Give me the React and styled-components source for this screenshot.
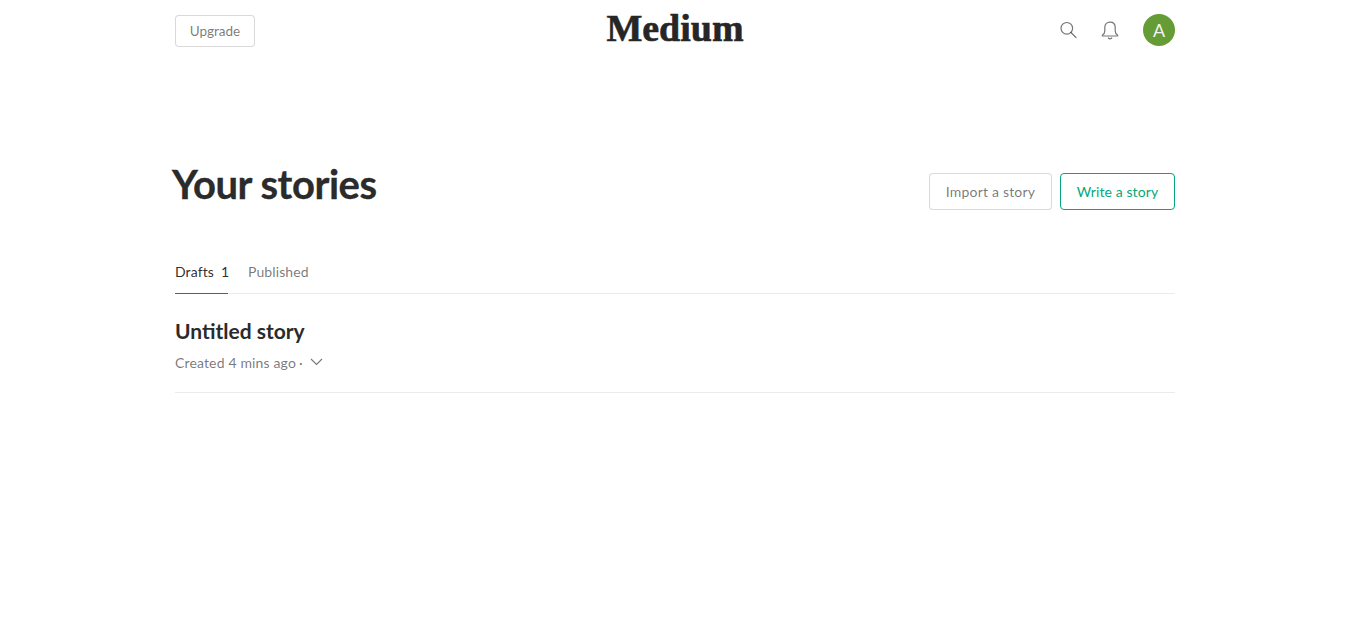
import React from 'react';
import styled, { createGlobalStyle } from 'styled-components';

const GlobalStyle = createGlobalStyle`
  body {
    margin: 0;
    background: #fff;
    font-family: "Lato", "Noto Sans", sans-serif;
    color: rgba(0, 0, 0, 0.84);
  }
`;

const Page = styled.div`
  width: 1000px;
  margin-left: 175px;
`;

const TopBar = styled.header`
  display: flex;
  align-items: center;
  justify-content: space-between;
  height: 60px;
`;

const TopSide = styled.div`
  flex: 1;
  display: flex;
  align-items: center;
  justify-content: ${(p) => (p.$end ? 'flex-end' : 'flex-start')};
`;

const Logo = styled.div`
  font-family: "Liberation Serif", serif;
  font-weight: 700;
  font-size: 38px;
  line-height: 56px;
  padding-bottom: 4px;
  -webkit-text-stroke: 0.6px #262626;
  color: #262626;
`;

const Button = styled.button`
  box-sizing: border-box;
  height: ${(p) => p.$height}px;
  width: ${(p) => p.$width}px;
  padding: 0;
  border: 1px solid ${(p) => (p.$green ? '#03a87c' : 'rgba(0, 0, 0, 0.15)')};
  border-radius: 4px;
  background: #fff;
  color: ${(p) => (p.$green ? '#03a87c' : 'rgba(0, 0, 0, 0.54)')};
  font-family: inherit;
  font-size: ${(p) => (p.$small ? '13.5px' : '14px')};
  letter-spacing: ${(p) => (p.$small ? '0' : p.$green ? '0.1px' : '0.2px')};
`;

const UpgradeSlot = styled.div`
  display: flex;
  padding-top: 2px;
`;

const IconButton = styled.span`
  display: flex;
  width: 24px;
  height: 24px;
  margin-right: ${(p) => p.$gap}px;
  color: rgba(0, 0, 0, 0.54);
`;

const Avatar = styled.div`
  display: flex;
  align-items: center;
  justify-content: center;
  width: 32px;
  height: 32px;
  border-radius: 50%;
  background: #669c35;
  color: #f2f2f2;
  font-size: 18px;
`;

const TitleRow = styled.div`
  display: flex;
  align-items: flex-start;
  justify-content: space-between;
  padding-top: 102px;
  height: 57px;
`;

const Title = styled.h1`
  margin: -2px 0 0 -3px;
  font-size: 40px;
  line-height: 48px;
  font-weight: 700;
  letter-spacing: -0.45px;
  color: #2b2b2b;
  -webkit-text-stroke: 0.3px #2b2b2b;
`;

const Actions = styled.div`
  display: flex;
  gap: 8px;
  padding-top: 11px;
`;

const Tabs = styled.nav`
  display: flex;
  gap: 20px;
  margin-top: 36px;
  border-bottom: 1px solid rgba(0, 0, 0, 0.08);
`;

const Tab = styled.div`
  display: flex;
  gap: 7px;
  width: ${(p) => (p.$active ? '53px' : 'auto')};
  height: 39px;
  box-sizing: border-box;
  line-height: 34px;
  font-size: 14px;
  letter-spacing: 0.1px;
  margin-bottom: -1px;
  color: ${(p) => (p.$active ? 'rgba(0, 0, 0, 0.84)' : 'rgba(0, 0, 0, 0.54)')};
  border-bottom: ${(p) => (p.$active ? '1px solid rgba(0, 0, 0, 0.6)' : '0')};
`;

const Story = styled.article`
  height: 99px;
  box-sizing: border-box;
  padding-top: 23px;
  border-bottom: 1px solid rgba(0, 0, 0, 0.08);
`;

const StoryTitle = styled.h3`
  margin: 0;
  font-size: 21px;
  line-height: 28px;
  font-weight: 700;
  color: #2b2b2b;
`;

const Meta = styled.div`
  display: flex;
  align-items: center;
  gap: 3px;
  margin-top: 8px;
  font-size: 14px;
  line-height: 20px;
  letter-spacing: 0.15px;
  color: rgba(0, 0, 0, 0.54);
`;

const Chevron = styled.svg`
  margin-left: 4px;
  width: 13px;
  height: 8px;
  margin-top: -2px;
`;

export default function App() {
  return (
    <Page>
      <GlobalStyle />
      <TopBar>
        <TopSide>
          <UpgradeSlot>
            <Button $width={80} $height={32} $small>Upgrade</Button>
          </UpgradeSlot>
        </TopSide>
        <Logo>Medium</Logo>
        <TopSide $end>
          <IconButton $gap={18}>
            <svg width="24" height="24" viewBox="0 0 24 24" fill="none" stroke="currentColor" strokeWidth="1.2">
              <circle cx="10.800" cy="10.300" r="5.800" />
              <path d="M15 14.500l5 5" strokeLinecap="round" />
            </svg>
          </IconButton>
          <IconButton $gap={21}>
            <svg width="24" height="24" viewBox="0 0 24 24" fill="none" stroke="currentColor" strokeWidth="1.200">
              <path d="M4.500 17c1.500-.8 2.300-2 2.300-4.200V9.500c0-3.200 2-5.300 5.200-5.300s5.200 2.100 5.200 5.300v3.300c0 2.200.8 3.400 2.300 4.200.4.500.2 1-.3 1H4.800c-.5 0-.7-.5-.3-1z" strokeLinejoin="round" />
              <path d="M10.300 20c.9.800 2.500.800 3.400 0" strokeLinecap="round" />
            </svg>
          </IconButton>
          <Avatar>A</Avatar>
        </TopSide>
      </TopBar>
      <TitleRow>
        <Title>Your stories</Title>
        <Actions>
          <Button $width={123} $height={37}>Import a story</Button>
          <Button $width={115} $height={37} $green>Write a story</Button>
        </Actions>
      </TitleRow>
      <Tabs>
        <Tab $active><span>Drafts</span><span>1</span></Tab>
        <Tab>Published</Tab>
      </Tabs>
      <Story>
        <StoryTitle>Untitled story</StoryTitle>
        <Meta>
          <span>Created 4 mins ago</span>
          <span>·</span>
          <Chevron viewBox="0 0 13 8" fill="none" stroke="currentColor" strokeWidth="1.1">
            <path d="M1 1l5.500 5.500L12 1" />
          </Chevron>
        </Meta>
      </Story>
    </Page>
  );
}
